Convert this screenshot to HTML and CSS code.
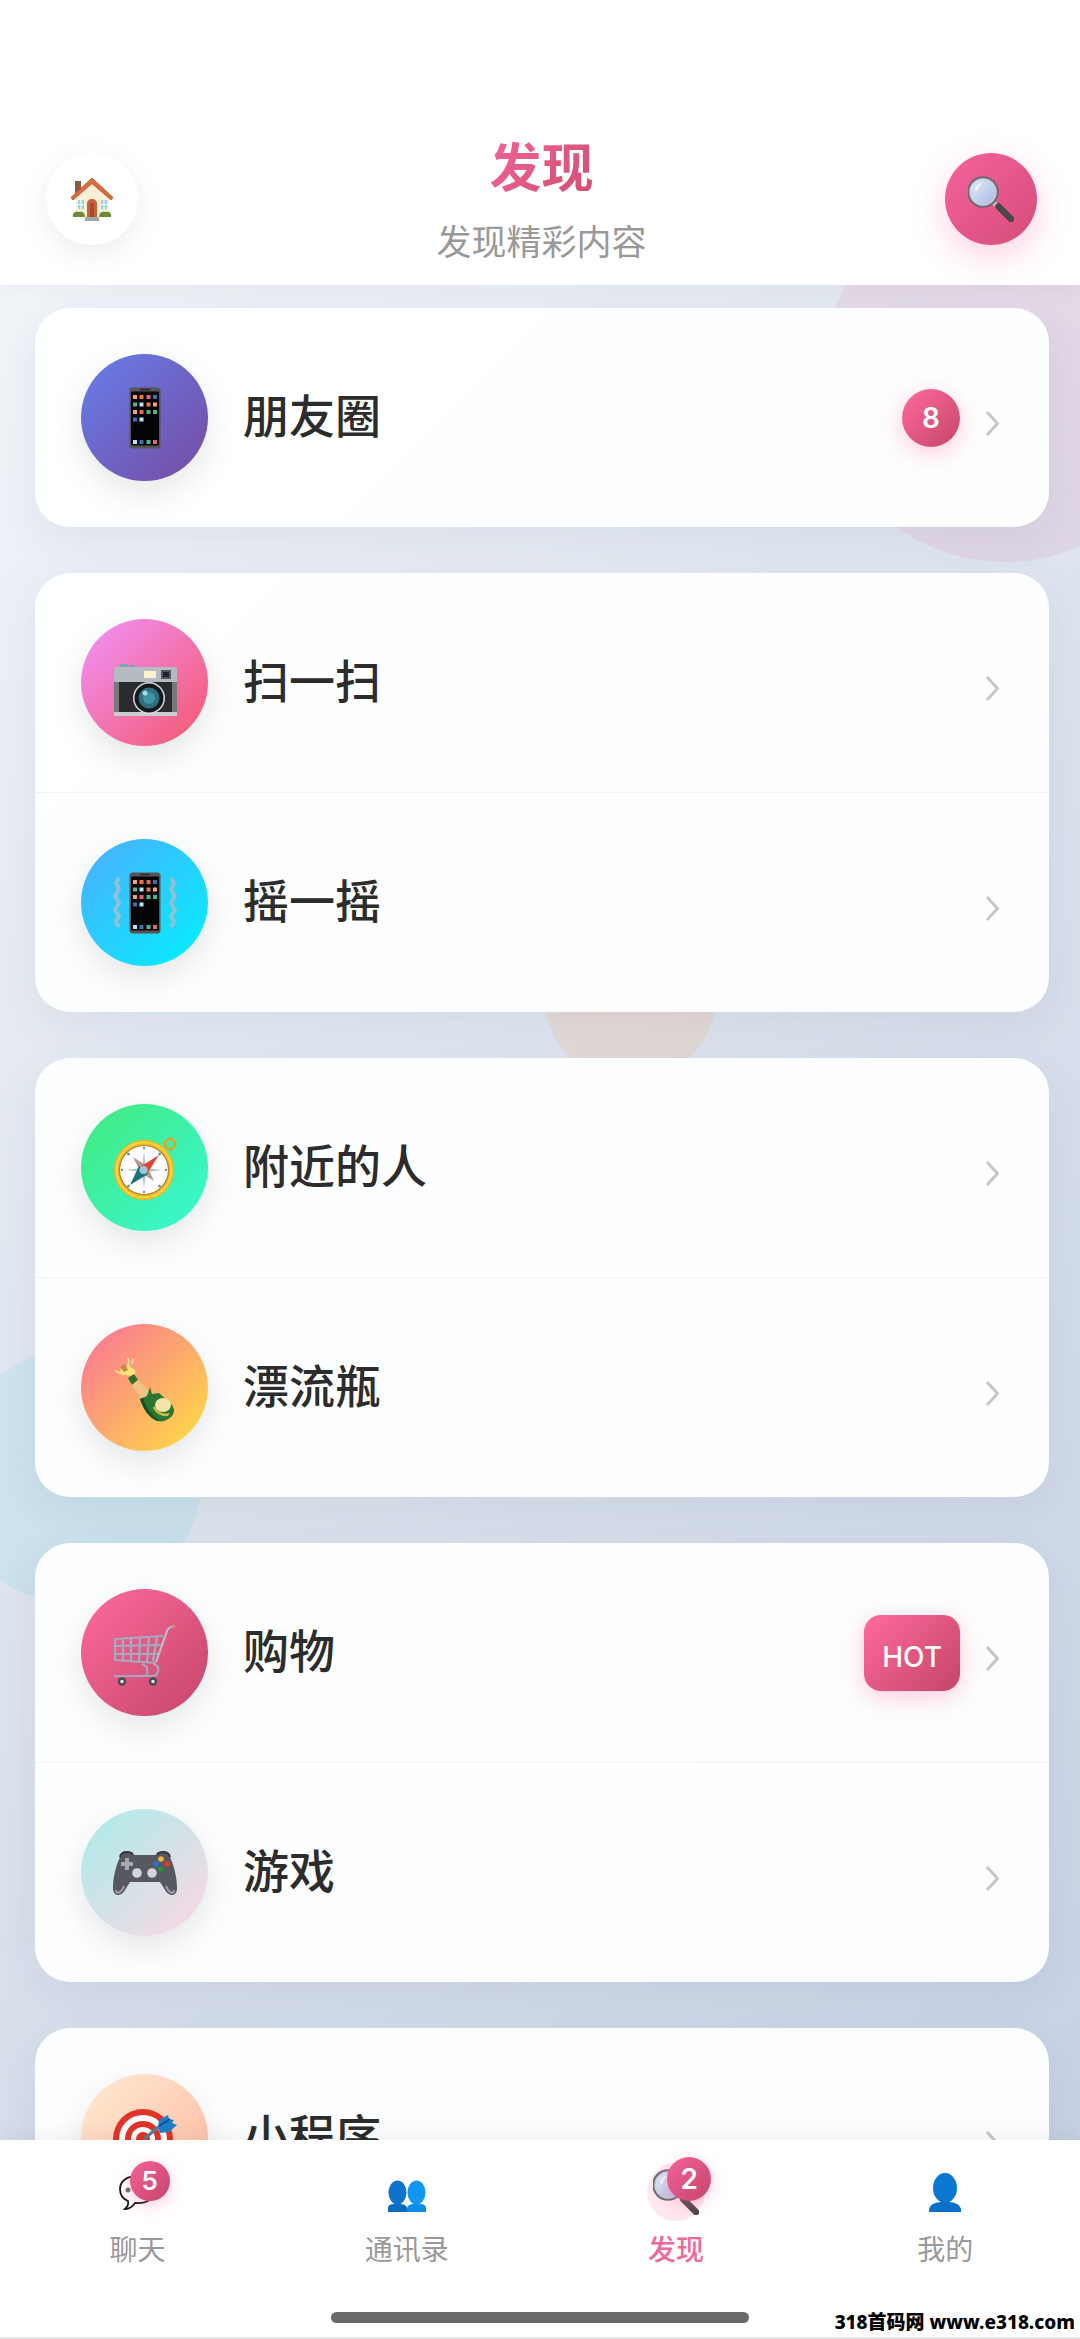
FILE: index.html
```html
<!DOCTYPE html>
<html lang="zh-CN">
<head>
<meta charset="utf-8">
<meta name="viewport" content="width=device-width, initial-scale=1">
<title>发现</title>
<link rel="stylesheet" href="styles.css">
</head>
<body>
<svg class="defs" aria-hidden="true">
  <defs>
    <linearGradient id="lens" x1="0" y1="0" x2="1" y2="1">
      <stop offset="0" stop-color="#e3effb"/><stop offset="1" stop-color="#a9b4e0"/>
    </linearGradient>
    <symbol id="chevron" viewBox="0 0 21 46"><path d="M5 17l10.500 11.500L5 40" fill="none" stroke="#c6c6c6" stroke-width="3"/></symbol>
    <symbol id="magnifier" viewBox="0 0 46 46">
      <path d="M24.500 25.500l6 6" stroke="#c5cbd0" stroke-width="4"/>
      <path d="M30.500 30.500l12.500 12.500" stroke="#4b4748" stroke-width="6.500" stroke-linecap="round"/>
      <circle cx="15" cy="16" r="14.500" fill="url(#lens)" stroke="#6c6875" stroke-width="2.600"/>
      <circle cx="15" cy="16" r="13" fill="none" stroke="#c9ced9" stroke-width="1.500"/>
      <path d="M7 15c0-5 4-8 8-8-3 2-5 4-5 7z" fill="#fff" opacity=".8"/>
    </symbol>
    <symbol id="phone" viewBox="0 0 32 62">
      <rect x=".5" y=".5" width="31" height="61" rx="3" fill="#565457"/>
      <rect x="2" y="4.500" width="28" height="54" rx="1" fill="#050507"/>
      <path d="M11 2.500h10" stroke="#2c2b2d" stroke-width="1.500"/>
      <g fill="#f4a07c"><path d="M4 8h4v4H4zM4 23h4v4H4zM24 15.500h4v4h-4z"/></g>
      <g fill="#f07a3c"><path d="M10.500 8h4v4h-4zM17.500 15.500h4v4h-4z"/></g>
      <g fill="#e8676a"><path d="M17.500 8h4v4h-4zM10.500 23h4v4h-4zM24 53h4v4h-4z"/></g>
      <g fill="#3f6fb5"><path d="M24 8h4v4h-4zM4 30.500h4v4H4zM10.500 53h4v4h-4z"/></g>
      <g fill="#4fb58a"><path d="M4 15.500h4v4H4zM17.500 23h4v4h-4zM24 23h4v4h-4zM17.500 53h4v4h-4z"/></g>
      <g fill="#bfe3f5"><path d="M10.500 15.500h4v4h-4zM10.500 30.500h4v4h-4zM4 53h4v4H4z"/></g>
    </symbol>
  </defs>
</svg>

<div class="app">
  <div class="float float-pink"></div>
  <div class="float float-orange"></div>
  <div class="float float-teal"></div>

  <header class="header">
    <button class="round-btn" type="button" aria-label="首页">
      <svg class="icon-sm" viewBox="0 0 46 46">
        <path d="M6 5h6v13H6z" fill="#8a5a48"/>
        <path d="M7 20L23 6l17 14v21H7z" fill="#f8efd9"/>
        <path d="M23 2L2 21.500l2 2.500L23 7.500 42 24l2-2.500z" fill="#dc6b3c" stroke="#b9502c" stroke-width=".8"/>
        <path d="M9 24h6v9H9zM32 24h6v9h-6z" fill="#9fd0dd"/>
        <path d="M12 24v9M9 28.500h6M35 24v9M32 28.500h6" stroke="#fff" stroke-width="1.200"/>
        <path d="M18 41V28c0-3 2-5 5-5s5 2 5 5v13z" fill="#c9603a"/>
        <path d="M21 41V29c0-3 4-3 4 0v12z" fill="#a94b30"/>
        <path d="M4 41c-1-5 3-6 6-5 4-1 6 1 6 5zM30 41c0-4 3-6 6-5 4-1 7 1 6 5z" fill="#6b8b34"/>
        <path d="M16 41h14v4H16z" fill="#9fa7ac"/>
      </svg>
    </button>
    <div class="heading">
      <h1 class="title">发现</h1>
      <p class="subtitle">发现精彩内容</p>
    </div>
    <button class="round-btn round-btn-pink" type="button" aria-label="搜索">
      <svg class="icon-sm"><use href="#magnifier"/></svg>
    </button>
  </header>

  <main class="list">
    <section class="card">
      <a class="row" href="#moments">
        <span class="disc disc-indigo"><svg class="icon"><use href="#phone" x="16" y="1" width="32" height="62"/></svg></span>
        <span class="label">朋友圈</span>
        <span class="count">8</span>
        <svg class="chevron"><use href="#chevron"/></svg>
      </a>
    </section>

    <section class="card">
      <a class="row" href="#scan">
        <span class="disc disc-rose">
          <svg class="icon" viewBox="0 0 64 64">
            <path d="M7 13h8v4H7zM16 14h6v3h-6z" fill="#7da5b0"/>
            <path d="M1 18q0-2 2-2h58q3 0 3 3v46H1z" fill="#b4bcc1"/>
            <path d="M1 31h63v30H1z" fill="#2b2a2d"/>
            <path d="M1 31h5v30H1zM59 31h5v30h-5z" fill="#77787c"/>
            <path d="M1 61h63v4H1z" fill="#c9ced1"/>
            <path d="M31 20h12v7H31z" fill="#fdf4cd"/>
            <path d="M48 19h10v9H48z" fill="#55565e"/><path d="M50 21h6v5h-6z" fill="#20222c"/>
            <circle cx="36" cy="47" r="16" fill="#d9dcdd"/>
            <circle cx="36" cy="47" r="14.500" fill="#17181b"/>
            <circle cx="36" cy="47" r="10.500" fill="#2f6f7e"/>
            <circle cx="36" cy="47" r="6" fill="#3f93a4"/>
            <circle cx="32" cy="42" r="2.500" fill="#a6dbe4"/>
          </svg>
        </span>
        <span class="label">扫一扫</span>
        <svg class="chevron"><use href="#chevron"/></svg>
      </a>
      <a class="row" href="#shake">
        <span class="disc disc-sky">
          <svg class="icon" viewBox="0 0 64 64">
            <path d="M6 7l-3 5 3 6-4 7 4 7-4 7 4 6-3 6 3 5M58 7l3 5-3 6 4 7-4 7 4 7-4 6 3 6-3 5" fill="none" stroke="#8fc3d3" stroke-width="4" stroke-linejoin="round"/>
            <use href="#phone" x="16" y="1" width="32" height="62"/>
          </svg>
        </span>
        <span class="label">摇一摇</span>
        <svg class="chevron"><use href="#chevron"/></svg>
      </a>
    </section>

    <section class="card">
      <a class="row" href="#nearby">
        <span class="disc disc-green">
          <svg class="icon" viewBox="0 0 64 64">
            <circle cx="57" cy="8" r="5" fill="none" stroke="#e8a21c" stroke-width="2.500"/>
            <circle cx="31" cy="34" r="30" fill="#f3b91f"/>
            <circle cx="31" cy="34" r="27.500" fill="none" stroke="#ffd84f" stroke-width="1.500"/>
            <circle cx="31" cy="34" r="24.500" fill="#fff" stroke="#a9802c" stroke-width="1.200"/>
            <path d="M31 16l2 16 16 2-16 2-2 16-2-16-16-2 16-2z" fill="#a9c6bd"/>
            <path d="M20 21l14 9 7 15-13-8z" fill="#b89791"/>
            <path d="M46 19L27 31l7 7z" fill="#e2443b"/>
            <path d="M17 49l9-19 9 8z" fill="#1f6f7d"/>
            <circle cx="30.500" cy="34" r="4" fill="#9dc9d6"/>
            <g fill="#6d9c9a"><circle cx="31" cy="12" r="1.200"/><circle cx="31" cy="56" r="1.200"/><circle cx="9" cy="34" r="1.200"/><circle cx="53" cy="34" r="1.200"/><circle cx="15.500" cy="18" r="1.500"/><circle cx="46.500" cy="18" r="1.500"/><circle cx="15.500" cy="50" r="1.500"/><circle cx="46.500" cy="50" r="1.500"/></g>
          </svg>
        </span>
        <span class="label">附近的人</span>
        <svg class="chevron"><use href="#chevron"/></svg>
      </a>
      <a class="row" href="#bottle">
        <span class="disc disc-sunset">
          <svg class="icon" viewBox="0 0 64 64">
            <path d="M19 20C14 19 8 20 3 16c4 1 6-1 4-5 4 4 7 2 8-6 1 4 3 8 6 8 3 3 1 6-1 7z" fill="#ffe27c"/>
            <path d="M7 11l5-3 3 6-4 2z" fill="#c88a45"/>
            <path d="M15 2l1 5M20 3l-1 5M2 15l4 1" stroke="#ffe0a6" stroke-width="1.500"/>
            <path d="M15 22l6-4 4 6-6 5z" fill="#2e6f2b"/>
            <path d="M19 29l6-5 13 13-9 7z" fill="#eec384"/>
            <path d="M27 43l7-3 3-9 2 7 7-1 13 12q4 6 0 11-7 7-14 5C37 60 30 52 27 43z" fill="#2a7531"/>
            <path d="M27 43c3 10 9 19 17 22l3 0c-8-5-14-13-17-23z" fill="#15501f"/>
            <ellipse cx="50" cy="49" rx="8" ry="7" fill="#f3e5a8"/>
            <path d="M41 50c4 6 9 9 16 7l-2 3c-7 1-12-3-15-8z" fill="#d9b94d"/>
          </svg>
        </span>
        <span class="label">漂流瓶</span>
        <svg class="chevron"><use href="#chevron"/></svg>
      </a>
    </section>

    <section class="card">
      <a class="row" href="#shop">
        <span class="disc disc-pink">
          <svg class="icon" viewBox="0 0 64 64" fill="none" stroke="#a3abc0" stroke-width="2.200">
            <path d="M62 5l-4 1q-3 1-4 4L43 41" stroke="#b9bfcb"/><path d="M58 6l4-1" stroke="#e0905c"/>
            <path d="M2 18l48-3M2 17v22l41 3M2 25l46-1M2 33l43 0M10 18v22M18 17v23M27 17l-1 24M36 16l-2 25M44 16l-4 24"/>
            <path d="M29 43l5 3v9M40 43q7 2 5 7-1 5-5 5H1" stroke="#a0a8be"/>
            <g fill="#e7e9ec" stroke="#4b4c55" stroke-width="2.500"><circle cx="9" cy="60.500" r="3"/><circle cx="40" cy="60.500" r="3"/></g>
          </svg>
        </span>
        <span class="label">购物</span>
        <span class="tag">HOT</span>
        <svg class="chevron"><use href="#chevron"/></svg>
      </a>
      <a class="row" href="#games">
        <span class="disc disc-pastel">
          <svg class="icon" viewBox="0 0 64 64">
            <path d="M7 16q1-5 7-5 5 0 6 3h24q1-3 6-3 6 0 7 5c4 9 7 20 7 31 0 9-8 9-12 2l-5-8H17l-5 8c-4 7-12 7-12-2 0-11 3-22 7-31z" fill="#55585e"/>
            <path d="M7 16q1-5 7-5 5 0 6 3M44 14q1-3 6-3 6 0 7 5" fill="none" stroke="#35373c" stroke-width="2"/>
            <path d="M3 49c0 5 5 3 8-4M61 49c0 5-5 3-8-4" fill="none" stroke="#9b9ea4" stroke-width="2"/>
            <path d="M14 17v12M8 23h12" stroke="#a7a9af" stroke-width="4"/>
            <circle cx="24" cy="32" r="4.800" fill="#d5d5dc"/><circle cx="39" cy="32" r="4.800" fill="#d5d5dc"/>
            <circle cx="48" cy="18" r="2.800" fill="#f3b43c"/><circle cx="54" cy="23" r="2.800" fill="#e5382f"/>
            <circle cx="43" cy="23" r="2.800" fill="#2f6fd0"/><circle cx="48" cy="28" r="2.800" fill="#2c8d45"/>
          </svg>
        </span>
        <span class="label">游戏</span>
        <svg class="chevron"><use href="#chevron"/></svg>
      </a>
    </section>

    <section class="card">
      <a class="row" href="#mini">
        <span class="disc disc-peach">
          <svg class="icon" viewBox="0 0 64 64">
            <circle cx="30" cy="33" r="30" fill="#e23329"/><circle cx="30" cy="33" r="24" fill="#fff"/>
            <circle cx="30" cy="33" r="18" fill="#e23329"/><circle cx="30" cy="33" r="12" fill="#fff"/>
            <circle cx="30" cy="33" r="7" fill="#e23329"/>
            <path d="M31 33l17-14" stroke="#4d7f94" stroke-width="3"/>
            <path d="M45 21l1-7 9-5 1 4 5 1-2 3 5 2-8 7-9 1z" fill="#1c7fc9"/>
            <path d="M46 20l11-7" stroke="#0b4e8f" stroke-width="1.500"/>
          </svg>
        </span>
        <span class="label">小程序</span>
        <svg class="chevron"><use href="#chevron"/></svg>
      </a>
    </section>
  </main>

  <nav class="nav">
    <div class="tabs">
      <a class="tab" href="#chat">
        <span class="tab-icon">
          <svg class="tab-svg" viewBox="0 0 40 40">
            <path d="M20 4C9 4 2 9 2 17c0 6 3 10 8 12 1 3-1 6-3 8 5 0 8-3 10-6 12 1 21-5 21-14S31 4 20 4z" fill="#fff" stroke="#111" stroke-width="1.800"/>
            <g fill="#6d6d6d"><circle cx="10" cy="18" r="2.500"/><circle cx="20" cy="18" r="2.500"/><circle cx="30" cy="18" r="2.500"/></g>
          </svg>
          <span class="dot">5</span>
        </span>
        <span class="tab-label">聊天</span>
      </a>
      <a class="tab" href="#contacts">
        <span class="tab-icon">
          <svg class="tab-svg" viewBox="0 0 40 40">
            <path d="M1 40v-4q0-4 6-4h6q6 0 7 4v4z" fill="#0b6cc2"/><ellipse cx="10.500" cy="20.500" rx="9" ry="12" fill="#0e73cb"/>
            <path d="M20 40v-4q1-4 7-4h6q6 0 6 4v4z" fill="#0b8ee8"/><ellipse cx="29.500" cy="20.500" rx="9" ry="12" fill="#1296f3"/>
          </svg>
        </span>
        <span class="tab-label">通讯录</span>
      </a>
      <a class="tab" href="#discover" aria-current="page">
        <span class="tab-icon tab-icon-active">
          <svg class="icon-sm"><use href="#magnifier"/></svg>
          <span class="dot dot-lg">2</span>
        </span>
        <span class="tab-label tab-label-active">发现</span>
      </a>
      <a class="tab" href="#me">
        <span class="tab-icon">
          <svg class="tab-svg" viewBox="0 0 40 40">
            <path d="M4 40v-3q1-6 12-7h8q11 1 12 7v3z" fill="#0a70c8"/><ellipse cx="20" cy="16" rx="12" ry="15" fill="#0a78d0"/>
          </svg>
        </span>
        <span class="tab-label">我的</span>
      </a>
    </div>
    <div class="home-bar"></div>
  </nav>
  <p class="watermark">318首码网 www.e318.com</p>
</div>
</body>
</html>
```
FILE: styles.css
```css
* { box-sizing: border-box; }

body {
  margin: 0;
  font-family: "Inter", "Noto Sans CJK SC", sans-serif;
  color: #2c2c2c;
}

a { color: inherit; text-decoration: none; }

.defs { position: absolute; width: 0; height: 0; }

.app {
  position: relative;
  display: flex;
  flex-direction: column;
  height: 100vh;
  overflow: hidden;
  background: linear-gradient(135deg, #f5f7fa 0%, #c3cfe2 100%);
}

.float { position: absolute; border-radius: 50%; }
.float-pink { right: -109px; top: 194px; width: 368px; height: 368px; background: rgba(240, 90, 150, .1); }
.float-orange { left: 544px; top: 910px; width: 172px; height: 172px; background: rgba(255, 170, 90, .16); }
.float-teal { left: -52px; top: 1350px; width: 254px; height: 254px; background: rgba(78, 205, 220, .12); }

.header {
  position: relative;
  z-index: 2;
  flex: none;
  display: flex;
  align-items: center;
  justify-content: space-between;
  padding: 130px 43px 17px 46px;
  background: rgba(255, 255, 255, .98);
  box-shadow: 0 4px 20px rgba(0, 0, 0, .04);
}

.heading { text-align: center; }

.title {
  margin: 0 0 8px;
  font-size: 52px;
  line-height: 78px;
  font-weight: 600;
  background: linear-gradient(135deg, #ff6b9d, #c44569);
  -webkit-background-clip: text;
  background-clip: text;
  color: transparent;
}

.subtitle {
  margin: 0;
  font-size: 35px;
  line-height: 52px;
  color: #999;
}

.round-btn {
  display: flex;
  align-items: center;
  justify-content: center;
  width: 92px;
  height: 92px;
  padding: 0;
  border: 0;
  border-radius: 50%;
  background: #fff;
  box-shadow: 0 8px 30px rgba(0, 0, 0, .08);
}

.round-btn-pink {
  background: linear-gradient(135deg, #f5629a, #d64c7c);
  box-shadow: 0 12px 35px rgba(255, 107, 157, .3);
}

.icon-sm { width: 46px; height: 46px; }

.list {
  position: relative;
  flex: 1;
  min-height: 0;
  display: flex;
  flex-direction: column;
  gap: 46px;
  padding: 23px 31px 23px 35px;
  overflow: hidden;
}

.card {
  flex: none;
  border-radius: 35px;
  background: rgba(254, 255, 255, .96);
  box-shadow: 0 12px 40px rgba(60, 80, 110, .08);
}

.row {
  display: flex;
  align-items: center;
  padding: 46px;
}

.row + .row { border-top: 1px solid #f2f2f2; }

.disc {
  display: flex;
  align-items: center;
  justify-content: center;
  width: 127px;
  height: 127px;
  border-radius: 50%;
  box-shadow: 0 12px 35px rgba(0, 0, 0, .1);
}

.disc-indigo { background: linear-gradient(135deg, #667eea, #764ba2); }
.disc-rose { background: linear-gradient(135deg, #f093fb, #f5576c); }
.disc-sky { background: linear-gradient(135deg, #4facfe, #00f2fe); }
.disc-green { background: linear-gradient(135deg, #43e97b, #38f9d7); }
.disc-sunset { background: linear-gradient(135deg, #fa709a, #fee140); }
.disc-pink { background: linear-gradient(135deg, #ff6b9d, #c44569); }
.disc-pastel { background: linear-gradient(135deg, #a8edea, #fed6e3); }
.disc-peach { background: linear-gradient(135deg, #ffecd2, #fcb69f); }

.icon { width: 64px; height: 64px; overflow: visible; }

.label {
  flex: 1;
  margin-left: 35px;
  padding-bottom: 4px;
  font-size: 46px;
  line-height: 64px;
  font-weight: 500;
}

.count, .tag {
  color: #fff;
  background: linear-gradient(135deg, #ff6b9d, #c44569);
  box-shadow: 0 6px 23px rgba(255, 107, 157, .35);
  text-align: center;
}

.count {
  width: 58px;
  height: 58px;
  border-radius: 50%;
  font-size: 28px;
  line-height: 58px;
  font-weight: 600;
}

.tag {
  padding: 4px 18px 0;
  height: 76px;
  border-radius: 17px;
  font-size: 28px;
  line-height: 76px;
  font-weight: 500;
}

.chevron { width: 21px; height: 46px; margin-left: 22px; }

.nav {
  position: relative;
  z-index: 2;
  flex: none;
  background: rgba(255, 255, 255, .99);
  box-shadow: 0 -4px 20px rgba(0, 0, 0, .05);
  border-bottom: 2px solid #e6e6e6;
}

.tabs {
  display: grid;
  grid-template-columns: repeat(4, 1fr);
  padding: 23px 0 42px 3px;
}

.tab {
  display: flex;
  flex-direction: column;
  align-items: center;
  gap: 9px;
}

.tab-icon {
  position: relative;
  display: flex;
  align-items: center;
  justify-content: center;
  width: 58px;
  height: 58px;
  border-radius: 50%;
}

.tab-icon-active { background: rgba(255, 107, 157, .16); }

.tab-svg { width: 40px; height: 40px; }

.dot {
  position: absolute;
  top: -2px;
  right: -3px;
  width: 40px;
  height: 40px;
  border-radius: 50%;
  background: linear-gradient(135deg, #f5629a, #c44569);
  box-shadow: 0 4px 16px rgba(255, 107, 157, .35);
  color: #fff;
  font-size: 26px;
  line-height: 40px;
  font-weight: 600;
  text-align: center;
}

.dot-lg {
  top: -6px;
  right: -6px;
  width: 44px;
  height: 44px;
  font-size: 28px;
  line-height: 44px;
}

.tab-label { font-size: 28px; line-height: 40px; color: #999; }
.tab-label-active { color: #ee6a9a; font-weight: 500; }

.home-bar {
  width: 40%;
  max-width: 418px;
  height: 11px;
  margin: 0 auto 14px;
  border-radius: 6px;
  background: #6a6a6a;
}

.watermark {
  position: absolute;
  z-index: 3;
  right: 5px;
  bottom: 4px;
  margin: 0;
  font-family: "Noto Sans", "Noto Sans CJK SC", sans-serif;
  font-size: 19px;
  line-height: 26px;
  font-weight: 800;
  color: #000;
}
```
